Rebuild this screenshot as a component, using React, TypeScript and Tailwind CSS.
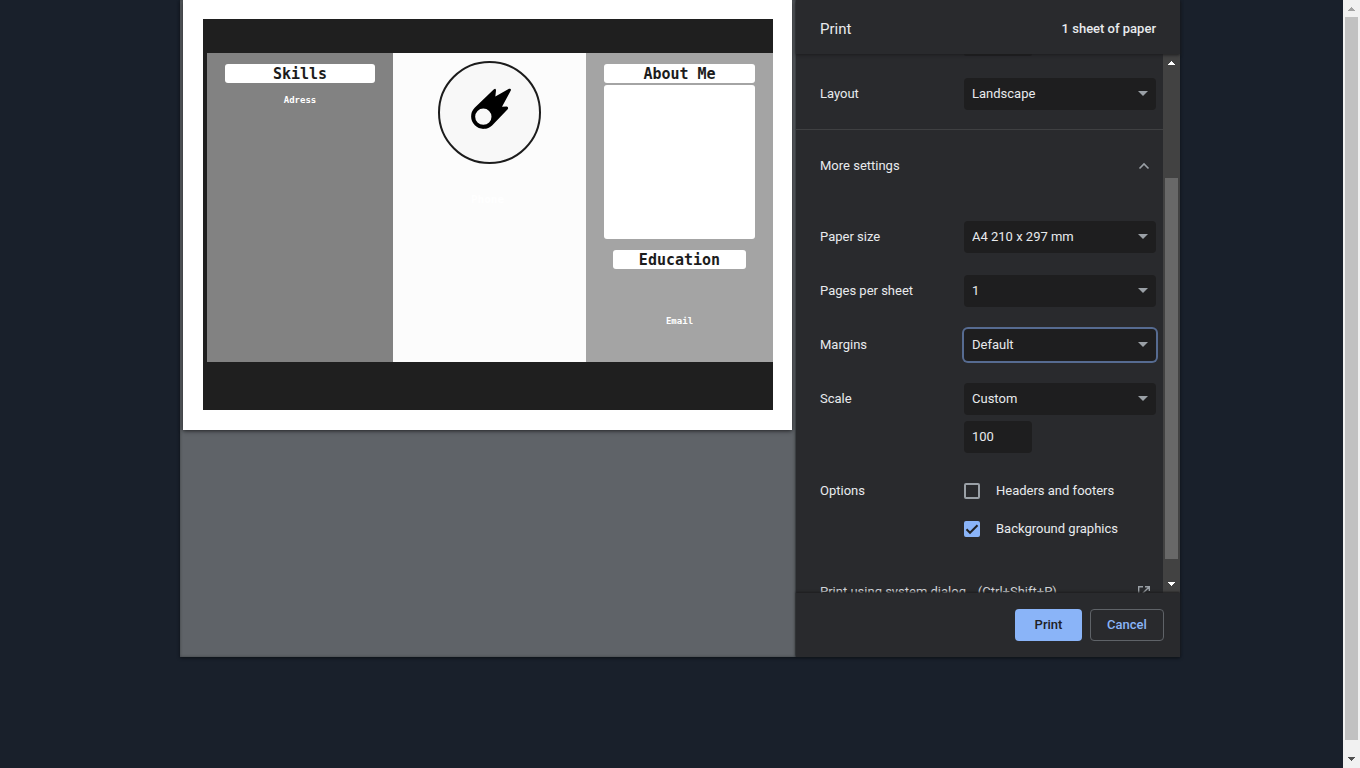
import type { ReactNode } from "react";

function Caret({ up, className }: { up?: boolean; className: string }) {
  return (
    <svg viewBox="0 0 8 4" className={className} shapeRendering="crispEdges" aria-hidden="true">
      <path d={up ? "M4 0 8 4H0Z" : "M0 0H8L4 4Z"} fill="currentColor" />
    </svg>
  );
}

function Comet() {
  return (
    <svg viewBox="0 0 120 122" className="h-[41px] w-10" aria-hidden="true">
      <path
        fillRule="evenodd"
        d="M11 59 68 4Q75 -1 75 7L73 25 114 2Q122 0 119 8L93 56 107 55Q114 57 110 63L64 111A37 37 0 1 1 11 59ZM37 61A24.500 24.500 0 1 0 37 110A24.500 24.500 0 1 0 37 61Z"
        fill="#000"
      />
    </svg>
  );
}

function Heading({ children }: { children: ReactNode }) {
  return (
    <h2 className="rounded-[3px] bg-white pt-px text-[15px] leading-[18px] text-[#1c1c1c]">{children}</h2>
  );
}

function Preview() {
  return (
    <section
      aria-label="Print preview"
      className="min-w-0 flex-1 bg-[#5f6368] px-[3px] shadow-[inset_0_0_3px_#3c4043]"
    >
      <div className="bg-white pt-[19px] pr-[19px] pb-5 pl-5 shadow-[0_1px_4px_#202124]">
        <div className="bg-[#1f1f1f] pt-[34px] pb-12 pl-1 font-['DejaVu_Sans_Mono',monospace]">
          <div className="grid min-h-[309px] grid-cols-[186fr_193fr_187fr] text-center font-bold">
            <div className="bg-[#828282] px-[18px] pt-[11px]">
              <Heading>Skills</Heading>
              <p className="mt-3 text-[9px] leading-[10px] text-white">Adress</p>
            </div>
            <div className="flex flex-col items-center bg-[#fcfcfc] pt-2">
              <div className="flex size-[103px] items-center justify-center rounded-full border-2 border-[#1c1c1c] bg-[#f8f8f8] pr-px pb-2 pl-1">
                <Comet />
              </div>
              <p className="mt-7 pr-1 text-[11px] leading-4 text-white">Phone</p>
            </div>
            <div className="bg-[#a4a4a4] px-[18px] pt-[11px]">
              <Heading>About Me</Heading>
              <div className="mt-0.5 h-[154px] rounded-[3px] bg-white" />
              <div className="px-[9px] pt-[11px]">
                <Heading>Education</Heading>
              </div>
              <p className="mt-[47px] text-[9px] leading-[10px] text-white">Email</p>
            </div>
          </div>
        </div>
      </div>
    </section>
  );
}

function Row({ label, htmlFor, children }: { label: string; htmlFor?: string; children: ReactNode }) {
  return (
    <div className="flex items-start py-[11px]">
      <label htmlFor={htmlFor} className="w-36 leading-8">
        {label}
      </label>
      <div className="min-w-0 flex-1">{children}</div>
    </div>
  );
}

function Select({ id, value, focused }: { id: string; value: string; focused?: boolean }) {
  return (
    <div className="grid items-center">
      <select
        id={id}
        className={`col-start-1 row-start-1 h-8 w-full appearance-none rounded bg-[#1e1e1f] px-2 outline-none ${
          focused ? "ring-2 ring-[#566b91]" : ""
        }`}
      >
        <option>{value}</option>
      </select>
      <svg
        viewBox="0 0 10 5"
        className="pointer-events-none col-start-1 row-start-1 mr-2 mb-0.5 h-[5px] w-2.5 justify-self-end text-[#9aa0a6]"
        aria-hidden="true"
      >
        <path d="M0 0H10L5 5Z" fill="currentColor" />
      </svg>
    </div>
  );
}

function Check({ label, checked }: { label: string; checked?: boolean }) {
  return (
    <label className="flex h-[38px] items-center gap-4">
      <span className="grid">
        <input
          type="checkbox"
          defaultChecked={checked}
          className="peer col-start-1 row-start-1 size-4 appearance-none rounded-[2px] border-2 border-[#9aa0a6] checked:border-[#8ab4f8] checked:bg-[#8ab4f8]"
        />
        <svg
          viewBox="0 0 16 16"
          className="pointer-events-none invisible col-start-1 row-start-1 size-4 peer-checked:visible"
          aria-hidden="true"
        >
          <path d="m2.500 8.300 3.500 3.500L13.500 4.300" fill="none" stroke="#202124" strokeWidth="2" />
        </svg>
      </span>
      {label}
    </label>
  );
}

function Settings() {
  return (
    <section
      aria-label="Print settings"
      className="flex w-[385px] flex-col border-l border-[#3c4043] bg-[#292a2d] text-[13px] text-[#e8eaed]"
    >
      <header className="z-10 flex h-[54px] items-center justify-between px-6 pt-1 shadow-[0_1px_3px_#1c1c1e]">
        <h1 className="text-[15px]">Print</h1>
        <span className="font-medium">1 sheet of paper</span>
      </header>
      <div className="flex min-h-0 flex-1">
        <div className="min-w-0 flex-1 overflow-hidden">
          <div className="pr-[7px] pl-6">
            <div className="ml-36 h-0.5 w-[68px] rounded-b bg-[#1e1e1f]" />
            <div className="pt-[11px] pb-2">
              <Row label="Layout" htmlFor="layout">
                <Select id="layout" value="Landscape" />
              </Row>
            </div>
          </div>
          <hr className="border-[#3f4042]" />
          <button type="button" className="flex h-[72px] w-full items-center justify-between pr-[13px] pl-6">
            More settings
            <svg viewBox="0 0 12 8" className="h-2 w-3" aria-hidden="true">
              <path d="m1.500 6.500 4.500-4.500 4.500 4.500" fill="none" stroke="#9aa0a6" strokeWidth="1.600" />
            </svg>
          </button>
          <div className="pt-2 pr-[7px] pl-6">
            <Row label="Paper size" htmlFor="paper">
              <Select id="paper" value="A4 210 x 297 mm" />
            </Row>
            <Row label="Pages per sheet" htmlFor="pages">
              <Select id="pages" value="1" />
            </Row>
            <Row label="Margins" htmlFor="margins">
              <Select id="margins" value="Default" focused />
            </Row>
            <Row label="Scale" htmlFor="scale">
              <Select id="scale" value="Custom" />
              <input
                aria-label="Scale percentage"
                defaultValue="100"
                className="mt-1.5 block h-8 w-[68px] rounded bg-[#1e1e1f] px-2 pb-0.5 outline-none"
              />
            </Row>
            <div className="flex pt-2 pb-5">
              <span className="w-36 leading-[38px]">Options</span>
              <div>
                <Check label="Headers and footers" />
                <Check label="Background graphics" checked />
              </div>
            </div>
          </div>
          <button type="button" className="flex h-12 w-full items-center justify-between pr-[13px] pl-6 text-[#d0d3d7]">
            Print using system dialog… (Ctrl+Shift+P)
            <svg viewBox="0 0 12 12" className="size-3" aria-hidden="true">
              <path
                d="M5 .7H.7v10.600h10.600V7M7 .7h4.300V5M11.300.7 4.500 7.500"
                fill="none"
                stroke="#9aa0a6"
                strokeWidth="1.400"
              />
            </svg>
          </button>
        </div>
        <div aria-hidden="true" className="flex w-[17px] flex-col items-center bg-[#424242] text-white">
          <Caret up className="mt-[7px] mr-px h-1 w-2" />
          <div className="mt-[113px] w-[13px] flex-1 bg-[#686868]" />
          <Caret className="mt-[23px] mr-px mb-[7px] h-1 w-2" />
        </div>
      </div>
      <footer className="z-10 flex items-center justify-end gap-2 bg-[#292a2d] px-4 py-4 shadow-[0_-1px_2px_#1c1c1e]">
        <button type="button" className="h-8 w-[67px] rounded bg-[#8ab4f8] font-medium text-[#202124]">
          Print
        </button>
        <button type="button" className="h-8 w-[74px] rounded border border-[#5f6368] font-medium text-[#8ab4f8]">
          Cancel
        </button>
      </footer>
    </section>
  );
}

export default function App() {
  return (
    <div className="grid min-h-screen grid-cols-[17px_minmax(0,1fr)_17px] bg-[#19202b] font-[Roboto,sans-serif]">
      <main className="col-start-2 flex h-[657px] w-full max-w-[1000px] justify-self-center shadow-[0_1px_3px_#0c1016]">
        <Preview />
        <Settings />
      </main>
      <div aria-hidden="true" className="flex flex-col items-center bg-[#f1f1f1]">
        <Caret up className="mt-[7px] mr-px h-1 w-2 text-[#a3a3a3]" />
        <div className="mt-1.5 w-[13px] flex-1 bg-[#c1c1c1]" />
        <Caret className="mt-[17px] mr-px mb-[7px] h-1 w-2 text-[#505050]" />
      </div>
    </div>
  );
}
